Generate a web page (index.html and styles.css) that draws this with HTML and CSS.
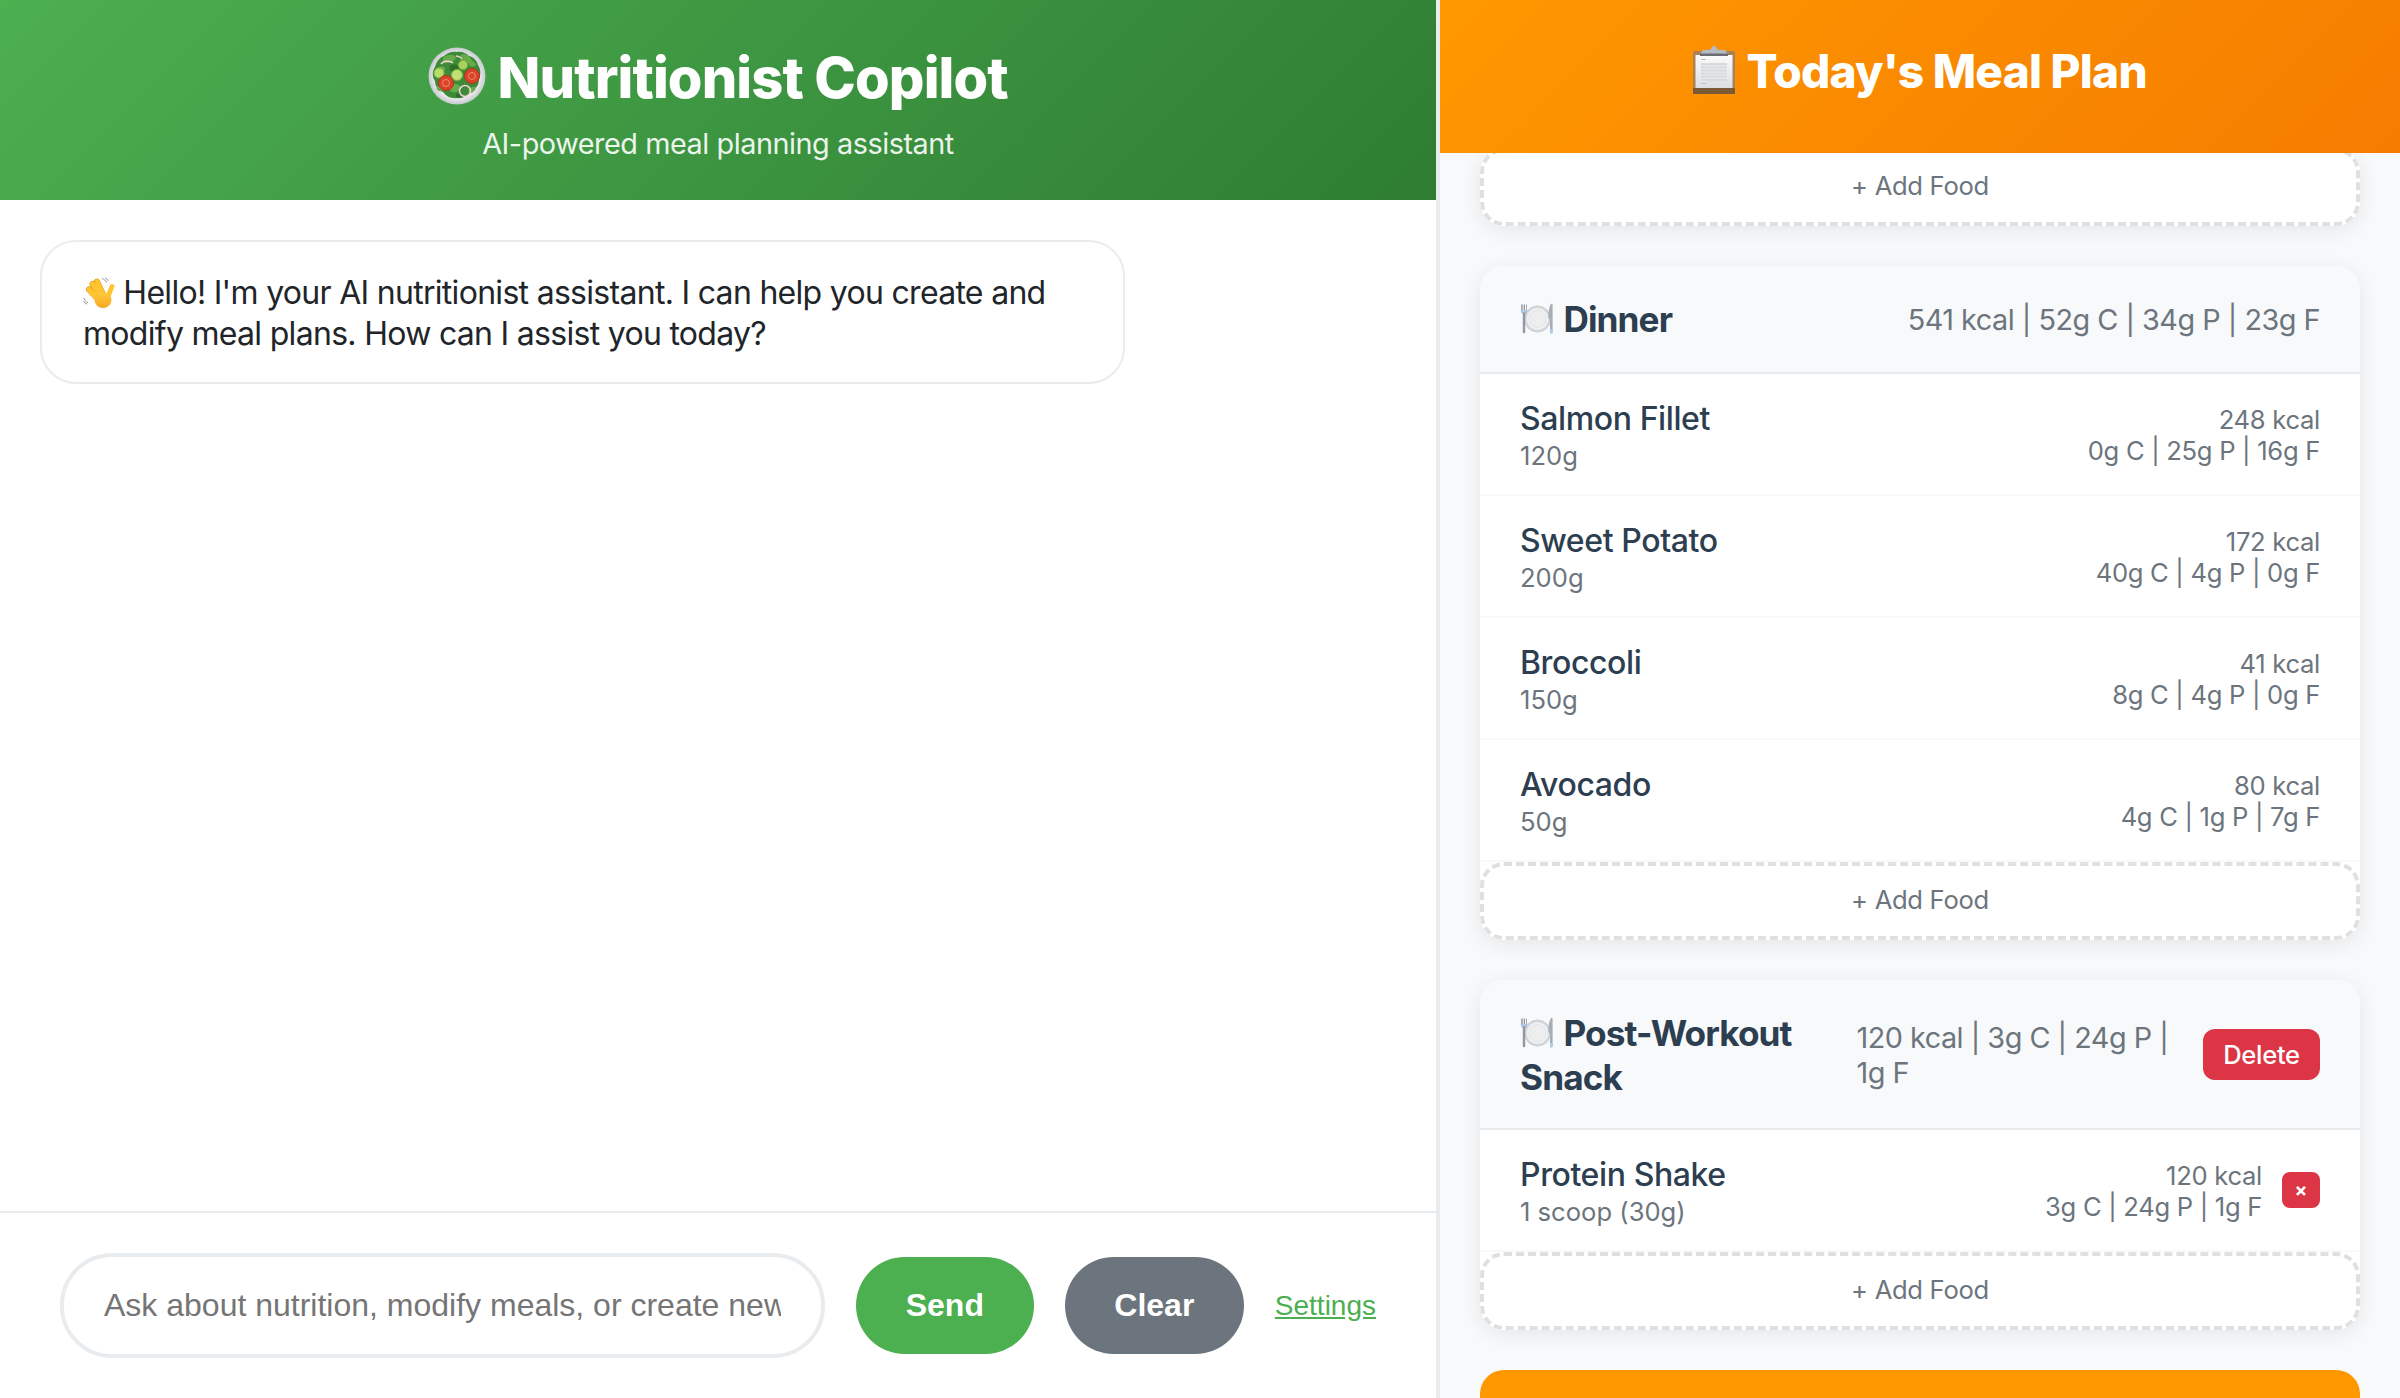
FILE: index.html
```html
<!DOCTYPE html>
<html lang="en">
<head>
    <meta charset="UTF-8">
    <meta name="viewport" content="width=device-width, initial-scale=1.0">
    <title>Nutritionist Copilot</title>
    <link rel="stylesheet" href="styles.css">
</head>
<body>
    <svg class="defs" width="0" height="0" aria-hidden="true">
        <defs>
            <radialGradient id="plateShade" cx="50%" cy="50%" r="50%">
                <stop offset="0%" stop-color="#ffffff"/>
                <stop offset="75%" stop-color="#f1f2f4"/>
                <stop offset="100%" stop-color="#c4c8cc"/>
            </radialGradient>
            <linearGradient id="paperShade" x1="0" y1="0" x2="0" y2="1">
                <stop offset="0%" stop-color="#fbfbfb"/>
                <stop offset="100%" stop-color="#dcdee0"/>
            </linearGradient>
            <linearGradient id="handShade" x1="0" y1="0" x2="0" y2="1">
                <stop offset="0%" stop-color="#ffca3a"/>
                <stop offset="100%" stop-color="#f7a823"/>
            </linearGradient>
            <symbol id="plate-icon" viewBox="0 0 35 32">
                <circle cx="17.5" cy="16" r="13" fill="url(#plateShade)" stroke="#c9cdd1" stroke-width=".8"/>
                <circle cx="17.5" cy="16" r="8.5" fill="#eceef0" stroke="#d5d8db" stroke-width=".6"/>
                <path d="M1.200 1.500V8c0 1.600 1 2.400 1.600 2.800V29a1.200 1.200 0 0 0 2.400 0V10.800c.6-.4 1.600-1.200 1.600-2.800V1.500H6V7H5V1.500H3.700V7H2.700V1.500z" fill="#8f98a3"/>
                <path d="M1.500 7h5v2.500h-5z" fill="#a9cdf0"/>
                <path d="M31 1c-1.800 2.500-2.600 7-2.600 13 0 1.400.8 2.200 1.600 2.400V29a1.300 1.300 0 0 0 2.600 0V1.800C32.600 1 31.500.6 31 1z" fill="#a5adb6"/>
                <path d="M30 26h2.600v3.200a1.300 1.300 0 0 1-2.600 0z" fill="#a9cdf0"/>
            </symbol>
        </defs>
    </svg>

    <main class="app">
        <section class="chat-panel">
            <header class="chat-header">
                <h1>
                    <svg class="emoji emoji-salad" viewBox="0 0 58 58" aria-hidden="true">
                        <circle cx="29" cy="29" r="28.500" fill="url(#plateShade)"/>
                        <path d="M29 5c5-1 9 1 12 4 5 1 8 5 9 9 3 4 3 10 1 14 0 6-3 10-8 12-3 5-9 8-14 7-6 1-11-2-14-6-5-2-8-6-8-11-3-4-3-10 0-14 1-5 4-9 9-11 3-3 8-5 13-4z" fill="#3f8a38"/>
                        <path d="M16 10c4-3 9-3 12 0-1 4-6 7-11 6-2-1-3-4-1-6zM34 7c5 0 9 3 10 7-3 3-8 3-11 0-1-3-1-5 1-7zM8 22c3-3 7-3 9-1 0 4-3 6-7 7-2-1-3-4-2-6zM23 38c4-2 8-1 10 2-1 4-5 6-9 5-3-1-3-5-1-7zM40 43c2-3 5-4 8-3-1 4-3 6-7 6zM41 13c3 0 6 2 7 5-2 2-5 2-7 0-1-2-1-3 0-5zM9 40c2-2 5-2 7 0 0 3-2 5-5 4-2-1-3-2-2-4z" fill="#68ab4a"/>
                        <path d="M22 19c3-2 7-2 9 1-1 3-5 5-8 4-2-1-2-3-1-5zM37 24c2-1 3 1 3 3-1 2-3 2-4 0zM28 47c3-1 6 0 7 2-2 2-5 2-7 1z" fill="#2f7029"/>
                        <circle cx="11" cy="26" r="5" fill="#b9dc6c" stroke="#7fb540"/>
                        <circle cx="35" cy="18" r="4.500" fill="#abd25e" stroke="#7fb540"/>
                        <circle cx="29" cy="28" r="5.500" fill="#c2e076" stroke="#7fb540"/>
                        <circle cx="44" cy="29" r="7.500" fill="#d9432a" stroke="#b93420"/>
                        <circle cx="44" cy="29" r="3.500" fill="none" stroke="#ee8e6e"/>
                        <circle cx="18" cy="36" r="7.500" fill="#d9432a" stroke="#b93420"/>
                        <circle cx="18" cy="36" r="3.500" fill="none" stroke="#ee8e6e"/>
                        <path d="M13 17c2-3 9-4 12-1" fill="none" stroke="#f3d3dc" stroke-width="1.500"/>
                        <circle cx="37" cy="44" r="5.500" fill="none" stroke="#f3d3dc" stroke-width="1.500"/>
                        <path d="M28 9c2 0 4 .8 6 2.500" fill="none" stroke="#f3d3dc" stroke-width="1.500"/>
                    </svg>
                    Nutritionist Copilot
                </h1>
                <p class="subtitle">AI-powered meal planning assistant</p>
            </header>

            <div class="chat-messages">
                <div class="message">
                    <svg class="emoji emoji-hand" viewBox="0 0 32 32" aria-hidden="true">
                        <g fill="none" stroke-linecap="round">
                            <path d="M6 12.500l8 8.500M9.500 7l7.500 11M14 4.500l5.500 12" stroke="#e6981c" stroke-width="6"/>
                            <path d="M6 12.500l8 8.500M9.500 7l7.500 11M14 4.500l5.500 12M29 9.500l-4 10" stroke="#ffc531" stroke-width="4.800"/>
                        </g>
                        <ellipse cx="20" cy="23" rx="8.500" ry="8" fill="url(#handShade)"/>
                        <path d="M19 1.500c2.200.6 3.700 2 4.500 4M22 1c1.500.5 2.700 1.500 3.500 3" stroke="#8d8d8d" stroke-width=".9" fill="none"/>
                        <path d="M1 21c.5 2 2 3.800 4 4.800M.5 24c.8 1.400 2 2.500 3.500 3.200" stroke="#8d8d8d" stroke-width=".9" fill="none"/>
                    </svg>
                    Hello! I'm your AI nutritionist assistant. I can help you create and modify meal plans. How can I assist you today?
                </div>
            </div>

            <form class="chat-input">
                <input type="text" class="message-input" placeholder="Ask about nutrition, modify meals, or create new plans...">
                <button type="button" class="pill-btn send-btn">Send</button>
                <button type="button" class="pill-btn clear-btn">Clear</button>
                <a href="#" class="settings-link">Settings</a>
            </form>
        </section>

        <aside class="plan-panel">
            <header class="plan-header">
                <h2>
                    <svg class="emoji emoji-clipboard" viewBox="0 0 42 48" aria-hidden="true">
                        <path d="M2 5h38a2 2 0 0 1 2 2v39a2 2 0 0 1-2 2H2a2 2 0 0 1-2-2V7a2 2 0 0 1 2-2z" fill="#a9825a"/>
                        <rect x="2.500" y="9" width="37" height="33" fill="url(#paperShade)"/>
                        <rect x="0" y="42" width="42" height="6" fill="#7a5a35"/>
                        <path d="M7 8l3-4h7l2-3a2.800 2.800 0 0 1 4 0l2 3h7l3 4z" fill="#b4bbc4"/>
                        <rect x="7" y="7.500" width="28" height="2.500" fill="#6a6e73"/>
                        <rect x="8" y="13" width="5" height="1" fill="#bcbec0"/>
                        <rect x="8" y="17" width="26" height="18" fill="#d8dadc"/>
                        <path d="M8 20h26M8 23h26M8 26h26M8 29h26M8 32h26" stroke="#eceded" stroke-width="1"/>
                        <rect x="8" y="37" width="5" height="1" fill="#bcbec0"/>
                    </svg>
                    Today's Meal Plan
                </h2>
            </header>

            <div class="plan-list">
                <div class="meal-card first-card">
                    <button type="button" class="add-food">+ Add Food</button>
                </div>

                <div class="meal-card">
                    <div class="meal-head">
                        <h3><svg class="emoji emoji-plate" aria-hidden="true"><use href="#plate-icon"/></svg> Dinner</h3>
                        <span class="meal-macros">541 kcal | 52g C | 34g P | 23g F</span>
                    </div>
                    <div class="food-row">
                        <div class="food-info"><div class="food-name">Salmon Fillet</div><div class="food-amount">120g</div></div>
                        <div class="food-macros">248 kcal<br>0g C | 25g P | 16g F</div>
                    </div>
                    <div class="food-row">
                        <div class="food-info"><div class="food-name">Sweet Potato</div><div class="food-amount">200g</div></div>
                        <div class="food-macros">172 kcal<br>40g C | 4g P | 0g F</div>
                    </div>
                    <div class="food-row">
                        <div class="food-info"><div class="food-name">Broccoli</div><div class="food-amount">150g</div></div>
                        <div class="food-macros">41 kcal<br>8g C | 4g P | 0g F</div>
                    </div>
                    <div class="food-row">
                        <div class="food-info"><div class="food-name">Avocado</div><div class="food-amount">50g</div></div>
                        <div class="food-macros">80 kcal<br>4g C | 1g P | 7g F</div>
                    </div>
                    <button type="button" class="add-food">+ Add Food</button>
                </div>

                <div class="meal-card">
                    <div class="meal-head">
                        <h3 class="wrap-title"><svg class="emoji emoji-plate" aria-hidden="true"><use href="#plate-icon"/></svg> Post-Workout Snack</h3>
                        <span class="meal-macros wrap-macros">120 kcal | 3g C | 24g P | 1g F</span>
                        <button type="button" class="delete-meal">Delete</button>
                    </div>
                    <div class="food-row">
                        <div class="food-info"><div class="food-name">Protein Shake</div><div class="food-amount">1 scoop (30g)</div></div>
                        <div class="food-macros">120 kcal<br>3g C | 24g P | 1g F</div>
                        <button type="button" class="delete-food">×</button>
                    </div>
                    <button type="button" class="add-food">+ Add Food</button>
                </div>

                <div class="add-meal"></div>
            </div>
        </aside>
    </main>
</body>
</html>
```

FILE: styles.css
```css
* {
    margin: 0;
    padding: 0;
    box-sizing: border-box;
}

html, body {
    height: 100%;
    overflow: hidden;
}

body {
    font-family: Inter, "Noto Sans", sans-serif;
    background: #fff;
    color: #212529;
}

.defs {
    display: block;
    height: 0;
}

.app {
    display: flex;
    height: 1398px;
}

.chat-panel {
    width: 1440px;
    display: flex;
    flex-direction: column;
    border-right: 4px solid #e9ecef;
}

.chat-header {
    height: 200px;
    background: linear-gradient(135deg, #4caf50, #2e7d32);
    color: white;
    text-align: center;
    padding-top: 40px;
}

.chat-header h1 {
    font-size: 56px;
    font-weight: 800;
    letter-spacing: -0.9px;
    line-height: 76px;
}

.subtitle {
    font-size: 28.800px;
    letter-spacing: -0.45px;
    line-height: 36px;
    margin-top: 10px;
    opacity: .9;
}

.emoji {
    display: inline-block;
}

.emoji-salad {
    width: 58px;
    height: 58px;
    vertical-align: -7px;
}

.emoji-hand {
    width: 32px;
    height: 32px;
    vertical-align: -5px;
}

.emoji-clipboard {
    width: 42px;
    height: 48px;
    margin-right: 2px;
    vertical-align: -6px;
}

.emoji-plate {
    width: 35px;
    height: 32px;
    margin-right: 1px;
    vertical-align: -3px;
}

.chat-messages {
    flex: 1;
    padding: 40px;
}

.message {
    width: 1085px;
    padding: 30px 41px 28px;
    border: 2px solid #e9ecef;
    border-radius: 36px;
    font-size: 32px;
    letter-spacing: -0.7px;
    line-height: 41px;
    color: #212529;
}

.chat-input {
    display: flex;
    align-items: center;
    gap: 31px;
    height: 187px;
    padding: 0 60px;
    border-top: 2px solid #e9ecef;
}

.message-input {
    flex: 1;
    min-width: 0;
    height: 105px;
    padding: 0 40px;
    border: 4px solid #e9ecef;
    border-radius: 52px;
    font-family: "Liberation Sans", Arial, sans-serif;
    font-size: 32px;
    outline: none;
}

.message-input::placeholder {
    color: #757575;
}

.pill-btn {
    height: 97px;
    width: 178px;
    flex-shrink: 0;
    border: none;
    border-radius: 49px;
    color: white;
    font-family: "Liberation Sans", Arial, sans-serif;
    font-size: 32px;
    font-weight: 700;
}

.send-btn {
    background: #4caf50;
}

.clear-btn {
    width: 179px;
    background: #6c757d;
}

.settings-link {
    color: #4caf50;
    font-family: "Liberation Sans", Arial, sans-serif;
    font-size: 28px;
}

.plan-panel {
    width: 960px;
    display: flex;
    flex-direction: column;
    background: #f8f9fa;
}

.plan-header {
    height: 153px;
    flex-shrink: 0;
    background: linear-gradient(135deg, #ff9800, #f57c00);
    color: white;
    text-align: center;
    padding-top: 36px;
}

.plan-header h2 {
    font-size: 46px;
    font-weight: 800;
    letter-spacing: -0.75px;
    line-height: 70px;
}

.plan-list {
    flex: 1;
    overflow: hidden;
    padding: 0 40px;
}

.meal-card {
    background: white;
    border-radius: 24px;
    box-shadow: 0 4px 20px rgba(0, 0, 0, .08);
    margin-bottom: 40px;
    overflow: hidden;
}

.first-card {
    margin-top: -5px;
}

.meal-head {
    display: flex;
    align-items: center;
    justify-content: space-between;
    min-height: 108px;
    padding: 29px 40px;
    background: #f8f9fa;
    border-bottom: 2px solid #e9ecef;
}

.meal-head h3 {
    font-size: 35.200px;
    font-weight: 700;
    letter-spacing: -0.9px;
    line-height: 44px;
    color: #2c3e50;
}

.meal-head .wrap-title {
    width: 305px;
    padding-top: 2px;
}

.meal-macros {
    font-size: 28.800px;
    letter-spacing: -0.5px;
    line-height: 35px;
    color: #6c757d;
}

.wrap-macros {
    width: 315px;
    padding-top: 2px;
}

.delete-meal {
    width: 117px;
    height: 51px;
    background: #dc3545;
    color: white;
    border: none;
    border-radius: 12px;
    font-family: inherit;
    font-size: 25.600px;
    font-weight: 500;
    letter-spacing: -0.3px;
}

.food-row {
    display: flex;
    align-items: center;
    height: 122px;
    padding: 0 40px;
    border-bottom: 2px solid #f8f9fa;
}

.food-info {
    flex: 1;
    padding-top: 3px;
}

.food-name {
    font-size: 32px;
    font-weight: 500;
    letter-spacing: -0.4px;
    line-height: 40px;
    color: #2c3e50;
}

.food-amount {
    font-size: 25.600px;
    line-height: 34px;
    color: #6c757d;
}

.food-macros {
    padding-top: 3px;
    font-size: 25.600px;
    letter-spacing: -0.3px;
    line-height: 30.500px;
    text-align: right;
    color: #6c757d;
}

.delete-food {
    width: 38px;
    height: 36px;
    margin-left: 20px;
    background: #dc3545;
    color: white;
    border: none;
    border-radius: 8px;
    font-size: 19px;
    font-weight: 700;
    font-family: inherit;
}

.add-food {
    display: block;
    width: 100%;
    height: 78px;
    padding-bottom: 3px;
    background: white;
    border: 4px dashed #e0e0e0;
    border-radius: 24px;
    font-family: inherit;
    font-size: 25.600px;
    letter-spacing: -0.3px;
    color: #6c757d;
}

.add-meal {
    height: 70px;
    background: #ff9800;
    border-radius: 24px 24px 0 0;
}
```
